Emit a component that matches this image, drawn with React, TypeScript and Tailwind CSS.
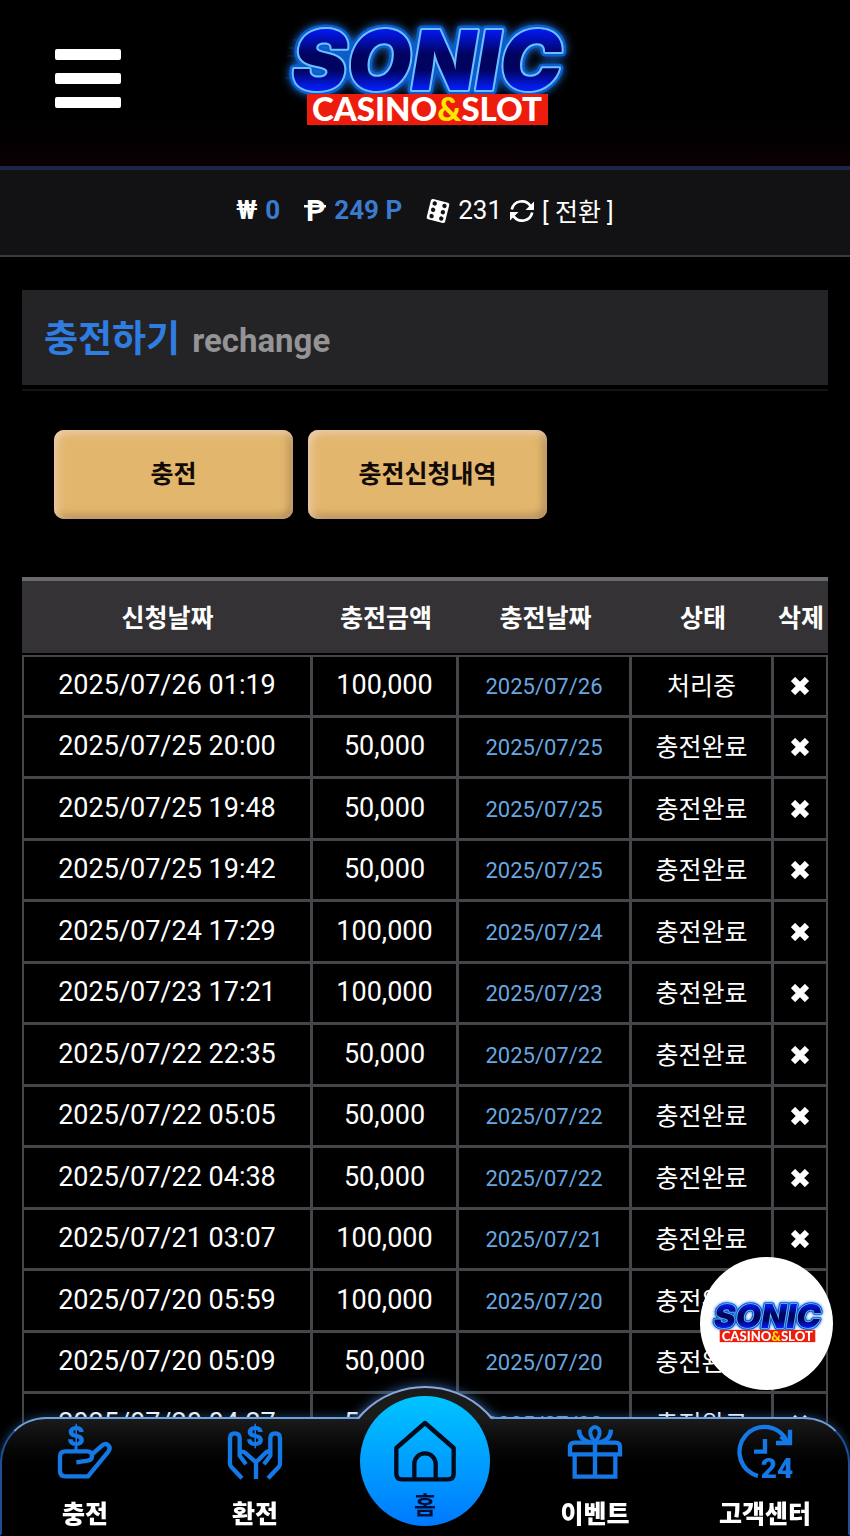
import React, { ReactNode, useId } from 'react';

type Row = { requested: string; amount: string; charged: string; status: string };

const ROWS: Row[] = [
  { requested: '2025/07/26 01:19', amount: '100,000', charged: '2025/07/26', status: '처리중' },
  { requested: '2025/07/25 20:00', amount: '50,000', charged: '2025/07/25', status: '충전완료' },
  { requested: '2025/07/25 19:48', amount: '50,000', charged: '2025/07/25', status: '충전완료' },
  { requested: '2025/07/25 19:42', amount: '50,000', charged: '2025/07/25', status: '충전완료' },
  { requested: '2025/07/24 17:29', amount: '100,000', charged: '2025/07/24', status: '충전완료' },
  { requested: '2025/07/23 17:21', amount: '100,000', charged: '2025/07/23', status: '충전완료' },
  { requested: '2025/07/22 22:35', amount: '50,000', charged: '2025/07/22', status: '충전완료' },
  { requested: '2025/07/22 05:05', amount: '50,000', charged: '2025/07/22', status: '충전완료' },
  { requested: '2025/07/22 04:38', amount: '50,000', charged: '2025/07/22', status: '충전완료' },
  { requested: '2025/07/21 03:07', amount: '100,000', charged: '2025/07/21', status: '충전완료' },
  { requested: '2025/07/20 05:59', amount: '100,000', charged: '2025/07/20', status: '충전완료' },
  { requested: '2025/07/20 05:09', amount: '50,000', charged: '2025/07/20', status: '충전완료' },
  { requested: '2025/07/20 04:27', amount: '50,000', charged: '2025/07/20', status: '충전완료' },
];

const CELL = 'border-r-[3px] border-b-[3px] border-[#464549] p-0 text-center align-middle last:border-r-2';

function Logo({ className }: { className: string }) {
  const id = useId();
  return (
    <svg viewBox="0 -16 300 148" className={className} role="img" aria-label="SONIC CASINO&SLOT">
      <defs>
        <linearGradient id={id} x1="0" y1="0" x2="0" y2="1">
          <stop offset="0.2" stopColor="#0418f0" />
          <stop offset="0.44" stopColor="#000360" />
          <stop offset="0.6" stopColor="#000360" />
          <stop offset="0.78" stopColor="#031cf0" />
        </linearGradient>
      </defs>
      <path d="M18 20H50M14 28H40M12 36H40M10 58H36" stroke="#1560d8" opacity="0.4" />
      <g
        className="font-[Inter,sans-serif] font-black italic"
        fontSize="83"
        textAnchor="middle"
        strokeLinejoin="round"
      >
        <text x="152" y="70" fill="#0b5ccf" stroke="#0b5ccf" strokeWidth="9" className="drop-shadow-[0_0_4px_#1a6fe0]">
          SONIC
        </text>
        <text x="152" y="70" fill={`url(#${id})`} stroke="#6cc0ff" strokeWidth="4" style={{ paintOrder: 'stroke' }}>
          SONIC
        </text>
      </g>
      <rect x="32" y="74" width="241" height="31" fill="#ee1c0c" />
      <text x="152" y="101" fontSize="33" textAnchor="middle" fill="#fff" className="font-[Lato,sans-serif] font-black">
        CASINO<tspan fill="#ffe600">&amp;</tspan>SLOT
      </text>
    </svg>
  );
}

function PointIcon() {
  return (
    <svg viewBox="0 0 22 26" className="h-[26px] w-[22px] overflow-visible" fill="#fff" aria-hidden="true">
      <text x="2" y="23" fontSize="30" className="font-[Roboto,sans-serif] font-bold">
        P
      </text>
      <rect x="0" y="7" width="22" height="2.500" />
    </svg>
  );
}

function DiceIcon() {
  return (
    <svg viewBox="0 0 24 24" className="h-6 w-6 overflow-visible" aria-hidden="true">
      <g transform="rotate(14 12 12)">
        <rect x="2.500" y="1.500" width="19" height="21" rx="2" fill="#fff" />
        <g fill="#121114">
          {[5.5, 12, 18.5].map((y) => (
            <React.Fragment key={y}>
              <circle cx="7" cy={y} r="2.200" />
              <circle cx="17" cy={y} r="2.200" />
            </React.Fragment>
          ))}
        </g>
      </g>
    </svg>
  );
}

function SyncIcon() {
  return (
    <svg viewBox="0 0 24 24" className="h-6 w-6" fill="none" stroke="#fff" strokeWidth="2.700" aria-hidden="true">
      <path d="M1.800 10.500A10.300 10.300 0 0 1 20.500 7" />
      <path d="M22.200 13.500A10.300 10.300 0 0 1 3.500 17" />
      <path d="M24 2.500V11H15.500Z M0 21.500V13H8.500Z" fill="#fff" stroke="none" />
    </svg>
  );
}

function DeleteIcon() {
  return (
    <svg viewBox="0 0 18 18" className="h-[18px] w-[18px]" stroke="#fff" strokeWidth="6" aria-hidden="true">
      <path d="M2 2L16 16M16 2L2 16" />
    </svg>
  );
}

function NavIcon({ children }: { children: ReactNode }) {
  return (
    <svg
      viewBox="0 0 162 162"
      className="h-[54px] w-[54px] overflow-visible"
      fill="none"
      stroke="#1478e6"
      strokeWidth="13"
      aria-hidden="true"
    >
      {children}
    </svg>
  );
}

const DepositIcon = (
  <NavIcon>
    <path d="M102 88L134 60Q144 53 151 61Q159 69 151 80L90 154H22Q6 154 6 138V94Q6 79 22 79H88Q102 79 102 93Q102 105 89 107L55 112" />
    <path d="M54 64V78" strokeWidth="9" />
    <text x="54" y="62" fontSize="80" textAnchor="middle" fill="#1478e6" stroke="none" className="font-[Inter,sans-serif] font-extrabold">
      $
    </text>
  </NavIcon>
);

const WithdrawIcon = (
  <NavIcon>
    <path d="M42 160L10 126Q6 122 6 116V40Q6 25 20 25Q35 25 35 40V92L54 118" />
    <path d="M36 84Q44 76 52 84L84 112L112 84Q120 76 128 84M84 110V162" />
    <path d="M120 160L152 126Q156 122 156 116V40Q156 25 142 25Q127 25 127 40V92L108 118" />
    <text x="81" y="62" fontSize="80" textAnchor="middle" fill="#1478e6" stroke="none" className="font-[Inter,sans-serif] font-extrabold">
      $
    </text>
  </NavIcon>
);

const EventIcon = (
  <NavIcon>
    <path d="M6 88V66Q6 53 19 53H143Q156 53 156 66V88Z" />
    <path d="M20 88V155H142V88M81 50V155" />
    <path d="M81 52Q60 26 70 12Q81 0 92 12Q102 26 81 52Z" strokeWidth="12" />
    <path d="M33 14Q34 46 68 52M129 14Q128 46 94 52" />
  </NavIcon>
);

const SupportIcon = (
  <NavIcon>
    <path d="M60 153A75 75 0 1 1 148 50" />
    <path d="M156 14V54H114M150 52L128 34" />
    <path d="M81 42V80H48" />
    <text x="117" y="160" fontSize="84" textAnchor="middle" fill="#1478e6" stroke="none" className="font-[Roboto,sans-serif] font-black">
      24
    </text>
  </NavIcon>
);

function NavItem({ icon, label }: { icon: ReactNode; label: string }) {
  return (
    <a href="#" className="relative flex flex-1 flex-col items-center gap-4 pt-2 text-[25px] leading-10 font-black text-white">
      {icon}
      {label}
    </a>
  );
}

function BottomNav() {
  return (
    <nav className="fixed inset-x-0 bottom-0 flex h-[119px] rounded-t-[46px] bg-linear-to-b from-[#1b1c1b] to-black to-60% shadow-[0_-1px_10px_#3a78c070]">
      <span className="absolute inset-0 rounded-t-[46px] border-2 border-x-[#1f4f96] border-t-[#6f9fdc] border-b-transparent" />
      <span className="absolute -top-[31px] left-1/2 h-44 w-44 -translate-x-1/2 rounded-full border-2 border-[#8aa6dc] bg-[#1a1b1b] shadow-[0_0_12px_#4a88d8b0] [clip-path:inset(-20px_-20px_143px_-20px)]" />
      <NavItem icon={DepositIcon} label="충전" />
      <NavItem icon={WithdrawIcon} label="환전" />
      <div className="relative flex flex-1 justify-center">
        <a
          href="#"
          className="absolute -top-[21px] flex h-[130px] w-[130px] flex-col items-center rounded-full bg-linear-to-b from-[#00c4ff] to-[#0078ff] pt-6 text-2xl leading-12 font-bold text-[#040c38]"
        >
          <svg viewBox="0 0 186 184" className="h-[62px] w-[62px] shrink-0" fill="none" stroke="#020a1c" strokeWidth="13" aria-hidden="true">
            <path d="M93 8L7 83V160Q7 177 24 177H162Q179 177 179 160V83Z" strokeLinejoin="round" />
            <path d="M61 177V131A32 32 0 0 1 125 131V177" />
          </svg>
          홈
        </a>
      </div>
      <NavItem icon={EventIcon} label="이벤트" />
      <NavItem icon={SupportIcon} label="고객센터" />
    </nav>
  );
}

export default function App() {
  return (
    <div className="min-h-screen bg-black pb-20 font-[Roboto,'Noto_Sans_CJK_KR',sans-serif] text-white">
      <header className="relative flex h-[170px] items-start justify-center border-b-4 border-[#1e2547] bg-linear-to-b from-black from-50% to-[#0c0003] pt-1">
        <button type="button" aria-label="메뉴" className="absolute top-[49px] left-[55px] flex w-[66px] flex-col gap-[13px]">
          <span className="h-[11px] rounded-xs bg-white" />
          <span className="h-[11px] rounded-xs bg-white" />
          <span className="h-[11px] rounded-xs bg-white" />
        </button>
        <a href="#">
          <Logo className="h-[148px] w-[300px]" />
        </a>
      </header>

      <div className="flex h-[87px] items-center justify-center border-b-2 border-[#3b3a3d] bg-[#121114] pb-1 text-[26px]">
        <span className="flex items-center gap-2 font-bold">
          ₩ <span className="text-[#3a7bd0]">0</span>
        </span>
        <span className="ml-6 flex items-center gap-2 font-bold">
          <PointIcon />
          <span className="text-[#3a7bd0]">249 P</span>
        </span>
        <span className="ml-6 flex items-center gap-2">
          <DiceIcon />
          231
        </span>
        <button type="button" className="ml-2 flex items-center gap-2 text-[25px]">
          <SyncIcon />
          <span className="pt-1">[ 전환 ]</span>
        </button>
      </div>

      <main className="px-[22px] pt-[33px]">
        <div className="border-b-2 border-[#141415] pb-1">
          <h1 className="flex h-[95px] items-center gap-3 bg-[#242325] px-[22px] pt-1 font-bold">
            <span className="text-[37px] leading-none text-[#2f7de0]">충전하기</span>
            <span className="pt-0.5 text-[33px] leading-none text-[#949395]">rechange</span>
          </h1>
        </div>

        <div className="mt-[39px] flex gap-[15px] px-8 text-[25px] font-bold text-[#120a06]">
          <button
            type="button"
            className="h-[89px] w-[239px] rounded-[10px] bg-[#e2b66d] shadow-[inset_3px_3px_9px_#f0d0b0,inset_-3px_-3px_9px_#a58250]"
          >
            충전
          </button>
          <button
            type="button"
            className="h-[89px] w-[239px] rounded-[10px] bg-[#e2b66d] shadow-[inset_3px_3px_9px_#f0d0b0,inset_-3px_-3px_9px_#a58250]"
          >
            충전신청내역
          </button>
        </div>

        <table className="mt-[58px] w-full table-fixed border-separate border-spacing-0">
          <colgroup>
            <col className="w-[291px]" />
            <col className="w-[146px]" />
            <col className="w-[173px]" />
            <col className="w-[142px]" />
            <col className="w-[54px]" />
          </colgroup>
          <thead>
            <tr className="h-[78px]">
              {['신청날짜', '충전금액', '충전날짜', '상태', '삭제'].map((title) => (
                <th
                  key={title}
                  className="border-t-4 border-b-2 border-t-[#69686b] border-b-black bg-[#343235] px-0 pt-1 pb-0 text-[25px] leading-9 font-bold whitespace-nowrap"
                >
                  {title}
                </th>
              ))}
            </tr>
          </thead>
          <tbody>
            {ROWS.map((row) => (
              <tr
                key={row.requested}
                className="odd:h-[62px] even:h-[61px] first:h-[63px]! [&:first-child>td]:border-t-2"
              >
                <td className={`${CELL} border-l-2 pb-0.5! text-[27px] leading-9`}>{row.requested}</td>
                <td className={`${CELL} pb-0.5! text-[27px] leading-9`}>{row.amount}</td>
                <td className={`${CELL} pt-0.5! text-[22px] leading-9 text-[#68a8e0]`}>{row.charged}</td>
                <td className={`${CELL} pt-0.5! text-[25px] leading-9`}>{row.status}</td>
                <td className={CELL}>
                  <button type="button" aria-label="삭제" className="flex w-full justify-center">
                    <DeleteIcon />
                  </button>
                </td>
              </tr>
            ))}
          </tbody>
        </table>
      </main>

      <a
        href="#"
        className="fixed right-[17px] bottom-[146px] flex h-[133px] w-[133px] items-center justify-center rounded-full bg-white"
      >
        <Logo className="h-[59px] w-[119px]" />
      </a>

      <BottomNav />
    </div>
  );
}
